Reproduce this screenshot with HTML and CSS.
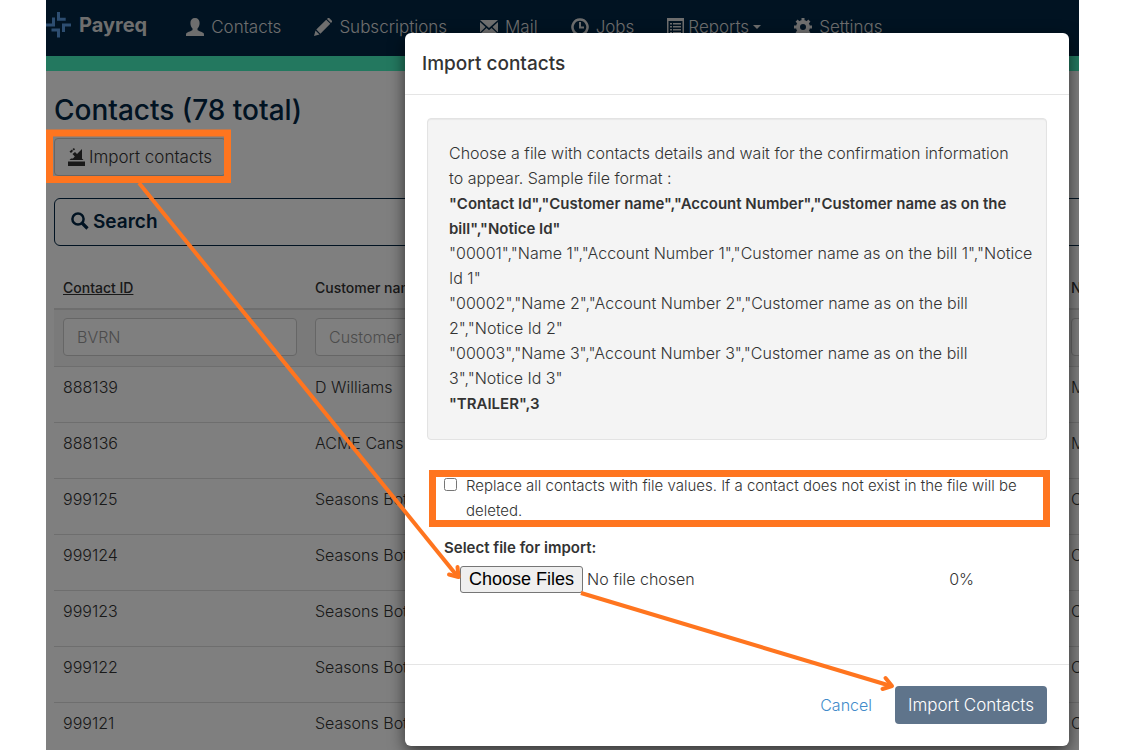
FILE: index.html
```
<!DOCTYPE html>
<html lang="en">
<head>
    <meta charset="UTF-8">
    <meta name="viewport" content="width=device-width, initial-scale=1.0">
    <title>Contacts</title>
    <link rel="stylesheet" href="styles.css">
</head>
<body>
    <div class="page">
        <nav class="navbar">
            <a class="brand" href="#">
                <svg width="26" height="26" viewBox="0 0 26 26" fill="none" stroke="#5a9ae0" stroke-width="3">
                    <path d="M12.500 0v7.200h7.200M25 13h-7.500v7M12.500 25.500v-7.500H5.500M0 13h7.500V5.500"/>
                </svg>
                Payreq
            </a>
            <a class="nav-link" href="#">
                <svg width="18" height="18" viewBox="0 0 18 18"><path d="M9 0c3 0 4.600 2 4.600 5 0 2.300-.9 4.300-2.100 5.400v1.500c0 .6 5 2 6 3.200.5.700.5 1.600.5 2.900H0c0-1.300 0-2.200.5-2.900 1-1.200 6-2.600 6-3.200v-1.500C5.300 9.300 4.400 7.300 4.400 5c0-3 1.600-5 4.600-5z"/></svg>
                Contacts
            </a>
            <a class="nav-link" href="#">
                <svg width="18" height="18" viewBox="0 0 18 18"><path d="M0 18l1.500-5.500 4 4zM2.300 11.600L12.200 1.700l4.100 4.100-9.900 9.900zM13 1l.7-.7c.5-.5 1.200-.4 1.700 0l2.300 2.300c.5.500.5 1.200 0 1.700l-.7.700z"/></svg>
                Subscriptions
            </a>
            <a class="nav-link" href="#">
                <svg width="18" height="18" viewBox="0 0 18 18"><path d="M0 2h18l-9 8zM0 4l5.500 5L0 14.500zM18 4l-5.500 5 5.500 5.500zM6.500 10L9 12.200l2.500-2.200 6.500 6H0z"/></svg>
                Mail
            </a>
            <a class="nav-link" href="#">
                <svg width="18" height="18" viewBox="0 0 18 18"><path fill="none" stroke="currentColor" stroke-width="2.500" d="M9 1.500a7.500 7.500 0 1 0 .01 0z"/><path d="M8 4h2v4.500h3v2H8z"/></svg>
                Jobs
            </a>
            <a class="nav-link nav-reports" href="#">
                <svg width="17" height="18" viewBox="0 0 17 18"><path fill-rule="evenodd" d="M0 0h17v18H0zM1.500 3v13.500h14V3zM3 5h2v1.500H3zM6 5h8v1.500H6zM3 8h2v1.500H3zM6 8h8v1.500H6zM3 11h2v1.500H3zM6 11h8v1.500H6zM3 14h2v1.500H3zM6 14h8v1.500H6z"/></svg>
                Reports
                <span class="caret"></span>
            </a>
            <a class="nav-link" href="#">
                <svg width="18" height="18" viewBox="0 0 18 18"><circle cx="9" cy="9" r="5" fill="none" stroke="currentColor" stroke-width="4"/><path fill="none" stroke="currentColor" stroke-width="3" d="M9 0v3M9 15v3M0 9h3M15 9h3M2.600 2.600l2.200 2.200M13.200 13.200l2.200 2.200M2.600 15.400l2.200-2.200M13.200 4.800l2.200-2.200"/></svg>
                Settings
            </a>
        </nav>

        <main class="content">
            <h1>Contacts (78 total)</h1>
            <button type="button" class="btn-import">
                <svg width="17" height="18" viewBox="0 0 17 18"><path d="M0 13.500h17V18H0zM1.500 12l1.500-1.500h11l1.500 1.500zM14 1v10H4.500l2.300-2.500L4.500 6 7 4l2 2zM1.500 3.500L4 1.500l1 1.500-2 2zM4.500 1L6 0l1 1.500-1.200 1z"/></svg>
                Import contacts
            </button>
            <button type="button" class="search-panel">
                <svg width="18" height="18" viewBox="0 0 18 18" fill="none" stroke="currentColor"><circle cx="7" cy="7" r="5.600" stroke-width="2.500"/><path stroke-width="3.200" d="M11 11l5.500 5.500"/></svg>
                Search
            </button>

            <table class="contacts">
                <thead>
                    <tr>
                        <th><a href="#">Contact ID</a></th>
                        <th>Customer name</th>
                        <th></th>
                        <th></th>
                        <th>N</th>
                    </tr>
                    <tr class="filters">
                        <td><input type="text" placeholder="BVRN" aria-label="Contact ID"></td>
                        <td><input type="text" placeholder="Customer" aria-label="Customer name"></td>
                        <td></td>
                        <td></td>
                        <td><input type="text" aria-label="N"></td>
                    </tr>
                </thead>
                <tbody>
                    <tr><td>888139</td><td>D Williams</td><td></td><td></td><td>M</td></tr>
                    <tr><td>888136</td><td>ACME Cans</td><td></td><td></td><td>M</td></tr>
                    <tr><td>999125</td><td>Seasons Bott</td><td></td><td></td><td>C</td></tr>
                    <tr><td>999124</td><td>Seasons Bott</td><td></td><td></td><td>C</td></tr>
                    <tr><td>999123</td><td>Seasons Bott</td><td></td><td></td><td>C</td></tr>
                    <tr><td>999122</td><td>Seasons Bott</td><td></td><td></td><td>C</td></tr>
                    <tr><td>999121</td><td>Seasons Bott</td><td></td><td></td><td>C</td></tr>
                </tbody>
            </table>
        </main>

        <div class="backdrop">
            <form class="modal" role="dialog" aria-labelledby="modalTitle">
                <h2 class="modal-header" id="modalTitle">Import contacts</h2>
                <div class="modal-body">
                    <div class="well">
                        Choose a file with contacts details and wait for the confirmation information<br>
                        to appear. Sample file format :<br>
                        <b>"Contact Id","Customer name","Account Number","Customer name as on the<br>
                        bill","Notice Id"</b><br>
                        "00001","Name 1","Account Number 1","Customer name as on the bill 1","Notice<br>
                        Id 1"<br>
                        "00002","Name 2","Account Number 2","Customer name as on the bill<br>
                        2","Notice Id 2"<br>
                        "00003","Name 3","Account Number 3","Customer name as on the bill<br>
                        3","Notice Id 3"<br>
                        <b>"TRAILER",3</b>
                    </div>
                    <div class="replace">
                        <input type="checkbox" id="replaceAll">
                        <label for="replaceAll">Replace all contacts with file values. If a contact does not exist in the file will be<br>deleted.</label>
                    </div>
                    <label class="file-label" for="importFile">Select file for import:</label>
                    <div class="file-row">
                        <input type="file" id="importFile" multiple>
                        <span class="progress">0%</span>
                    </div>
                </div>
                <div class="modal-footer">
                    <a class="cancel" href="#">Cancel</a>
                    <button type="button" class="btn-primary">Import Contacts</button>
                </div>
            </form>
        </div>
    </div>

    <!-- walkthrough highlights and arrows -->
    <svg class="guide" width="1125" height="750" viewBox="0 0 1125 750" fill="none" stroke="#ff751f">
        <rect x="49.500" y="133" width="178" height="46.500" stroke-width="7"/>
        <rect x="432.500" y="473.500" width="614" height="50" stroke-width="7"/>
        <g stroke-width="4" stroke-linejoin="round">
            <path d="M139 183L458 577"/>
            <path d="M449 574.500l9.500 2.500-1-10" stroke-linecap="round"/>
            <path d="M581 593l310 93"/>
            <path d="M882.500 689l9.500-3-6.500-8" stroke-linecap="round"/>
        </g>
    </svg>
</body>
</html>
```
FILE: styles.css
```
* {
    box-sizing: border-box;
}

body {
    margin: 0;
    background: #fff;
    color: #333;
    font-family: Inter, "Liberation Sans", sans-serif;
    font-size: 16px;
    font-weight: 300;
    line-height: 25px;
}

button, input {
    font: inherit;
    color: inherit;
}

a {
    color: inherit;
    text-decoration: none;
}

svg {
    flex: none;
    fill: currentColor;
}

.page {
    position: relative;
    height: 100vh;
    margin: 0 46px;
    overflow: hidden;
}

/* top bar */
.navbar {
    display: flex;
    align-items: center;
    gap: 33px;
    height: 71px;
    padding-bottom: 2px;
    background: #022644;
    border-bottom: 15px solid #46f0be;
    color: #ddd;
    font-size: 17px;
    white-space: nowrap;
}

.brand {
    display: flex;
    align-items: center;
    gap: 7px;
    margin-right: 6px;
    padding-bottom: 4px;
    font-size: 20px;
    font-weight: 700;
}

.brand svg {
    fill: none;
}

.nav-link {
    display: flex;
    align-items: center;
    gap: 7px;
}

.nav-reports {
    gap: 4px;
}

.caret {
    border-top: 4px solid;
    border-left: 4px solid transparent;
    border-right: 4px solid transparent;
}

.content {
    padding: 21px 0 0 8px;
}

h1 {
    margin: 0 0 9px;
    color: #022644;
    font-size: 28px;
    font-weight: 500;
    line-height: 37px;
}

.btn-import {
    display: flex;
    align-items: center;
    gap: 4px;
    height: 38px;
    padding: 0 13px;
    background: #fff;
    border: 1px solid #ccc;
    border-radius: 4px;
    font-size: 17px;
}

.search-panel {
    display: flex;
    align-items: center;
    gap: 4px;
    width: 1260px;
    height: 48px;
    margin: 22px 0 21px;
    padding: 0 16px 2px;
    background: #fff;
    border: 1px solid #022644;
    border-radius: 6px;
    color: #022644;
    font-size: 19px;
    font-weight: 600;
}

.search-panel svg {
    fill: none;
}

.contacts {
    width: 1260px;
    table-layout: fixed;
    border-collapse: collapse;
}

.contacts th,
.contacts td {
    height: 56px;
    padding: 8px 9px;
    text-align: left;
    vertical-align: top;
    border-top: 1px solid #ddd;
}

.contacts th {
    height: 40px;
    border: 0;
    font-size: 14px;
    font-weight: 500;
}

.contacts th a {
    text-decoration: underline;
}

.contacts .filters td {
    height: 57px;
    background: #f5f5f5;
    border-top: 2px solid #ddd;
}

.contacts input {
    display: block;
    width: 100%;
    height: 38px;
    padding: 0 13px;
    background: #fff;
    border: 1px solid #ccc;
    border-radius: 4px;
}

.contacts input::placeholder {
    color: #999;
}

/* import dialog */
.backdrop {
    position: absolute;
    inset: 0;
    padding: 33px 10px 4px 359px;
    background: rgba(0, 0, 0, 0.5);
}

.modal {
    display: flex;
    flex-direction: column;
    height: 100%;
    background: #fff;
    border-radius: 6px;
    box-shadow: 0 5px 16px rgba(0, 0, 0, 0.6);
}

.modal-header {
    margin: 0;
    padding: 18px 17px;
    border-bottom: 1px solid #e5e5e5;
    font-size: 19px;
    font-weight: 500;
}

.modal-body {
    flex: 1;
    padding: 23px 22px 0;
}

.well {
    padding: 22px 21px 23px;
    background: #f4f4f4;
    border: 1px solid #e3e3e3;
    border-radius: 4px;
    box-shadow: inset 0 1px 1px rgba(0, 0, 0, 0.05);
    white-space: nowrap;
}

b {
    font-size: 15px;
    font-weight: 600;
}

.replace {
    display: flex;
    align-items: flex-start;
    gap: 9px;
    margin: 33px 0 12px;
    padding-left: 17px;
    font-size: 15px;
    white-space: nowrap;
}

.replace input {
    width: 13px;
    height: 13px;
    margin: 5px 0 0;
}

.file-label {
    padding-left: 17px;
    font-size: 15px;
    font-weight: 600;
}

.file-row {
    display: flex;
    align-items: center;
    justify-content: space-between;
    padding: 6px 73px 0 33px;
}

.file-row input::file-selector-button {
    height: 27px;
    margin-right: 4px;
    padding: 0 8px;
    background: #efefef;
    border: 1px solid #767676;
    border-radius: 3px;
    color: #000;
    font: 18px "Liberation Sans", Arial, sans-serif;
}

.modal-footer {
    display: flex;
    align-items: center;
    justify-content: flex-end;
    gap: 23px;
    padding: 21px 22px 22px;
    border-top: 1px solid #e5e5e5;
}

.cancel {
    color: #428bca;
}

.btn-primary {
    height: 38px;
    padding: 0 13px;
    background: #5f748b;
    border: 0;
    border-radius: 4px;
    color: #fff;
    font-size: 17px;
}

.guide {
    position: absolute;
    top: 0;
    left: 0;
    fill: none;
    pointer-events: none;
}
```
